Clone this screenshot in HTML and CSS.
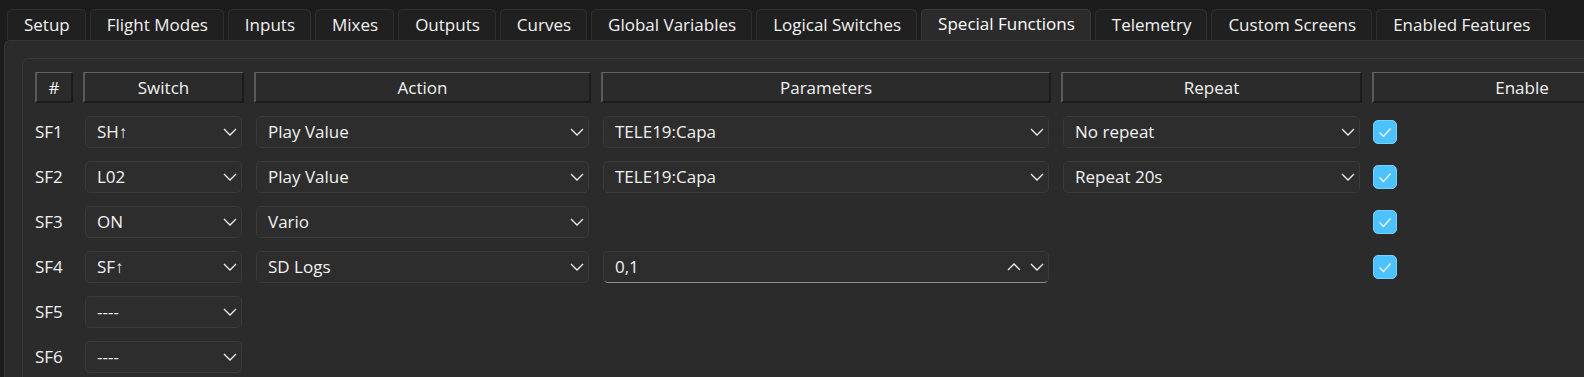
FILE: index.html
```html
<!DOCTYPE html>
<html>
<head>
  <meta charset="utf-8">
  <link rel="stylesheet" href="styles.css">
</head>
<body>
  <div class="tabs">
    <div class="tab">Setup</div>
    <div class="tab">Flight Modes</div>
    <div class="tab">Inputs</div>
    <div class="tab">Mixes</div>
    <div class="tab">Outputs</div>
    <div class="tab">Curves</div>
    <div class="tab">Global Variables</div>
    <div class="tab">Logical Switches</div>
    <div class="tab active">Special Functions</div>
    <div class="tab">Telemetry</div>
    <div class="tab">Custom Screens</div>
    <div class="tab">Enabled Features</div>
  </div>

  <div class="panel">
    <div class="frame">
      <div class="grid">
        <div class="head">#</div>
        <div class="head">Switch</div>
        <div class="head">Action</div>
        <div class="head">Parameters</div>
        <div class="head">Repeat</div>
        <div class="head">Enable</div>

        <!-- SF1 -->
        <div class="cell label">SF1</div>
        <div class="cell"><div class="combo"><span>SH↑</span><svg class="chev" viewBox="0 0 14 8"><polyline points="1,1 7,7 13,1"/></svg></div></div>
        <div class="cell"><div class="combo"><span>Play Value</span><svg class="chev" viewBox="0 0 14 8"><polyline points="1,1 7,7 13,1"/></svg></div></div>
        <div class="cell"><div class="combo"><span>TELE19:Capa</span><svg class="chev" viewBox="0 0 14 8"><polyline points="1,1 7,7 13,1"/></svg></div></div>
        <div class="cell"><div class="combo"><span>No repeat</span><svg class="chev" viewBox="0 0 14 8"><polyline points="1,1 7,7 13,1"/></svg></div></div>
        <div class="cell"><div class="check"><svg viewBox="0 0 22 22"><polyline points="5.5,11.5 9.5,15.5 16.5,7.5"/></svg></div></div>

        <!-- SF2 -->
        <div class="cell label">SF2</div>
        <div class="cell"><div class="combo"><span>L02</span><svg class="chev" viewBox="0 0 14 8"><polyline points="1,1 7,7 13,1"/></svg></div></div>
        <div class="cell"><div class="combo"><span>Play Value</span><svg class="chev" viewBox="0 0 14 8"><polyline points="1,1 7,7 13,1"/></svg></div></div>
        <div class="cell"><div class="combo"><span>TELE19:Capa</span><svg class="chev" viewBox="0 0 14 8"><polyline points="1,1 7,7 13,1"/></svg></div></div>
        <div class="cell"><div class="combo"><span>Repeat 20s</span><svg class="chev" viewBox="0 0 14 8"><polyline points="1,1 7,7 13,1"/></svg></div></div>
        <div class="cell"><div class="check"><svg viewBox="0 0 22 22"><polyline points="5.5,11.5 9.5,15.5 16.5,7.5"/></svg></div></div>

        <!-- SF3 -->
        <div class="cell label">SF3</div>
        <div class="cell"><div class="combo"><span>ON</span><svg class="chev" viewBox="0 0 14 8"><polyline points="1,1 7,7 13,1"/></svg></div></div>
        <div class="cell"><div class="combo"><span>Vario</span><svg class="chev" viewBox="0 0 14 8"><polyline points="1,1 7,7 13,1"/></svg></div></div>
        <div class="cell"></div>
        <div class="cell"></div>
        <div class="cell"><div class="check"><svg viewBox="0 0 22 22"><polyline points="5.5,11.5 9.5,15.5 16.5,7.5"/></svg></div></div>

        <!-- SF4 -->
        <div class="cell label">SF4</div>
        <div class="cell"><div class="combo"><span>SF↑</span><svg class="chev" viewBox="0 0 14 8"><polyline points="1,1 7,7 13,1"/></svg></div></div>
        <div class="cell"><div class="combo"><span>SD Logs</span><svg class="chev" viewBox="0 0 14 8"><polyline points="1,1 7,7 13,1"/></svg></div></div>
        <div class="cell">
          <div class="combo spin">
            <span>0,1</span>
            <span class="spin-btns">
              <svg class="chev" viewBox="0 0 14 8"><polyline points="1,7 7,1 13,7"/></svg>
              <svg class="chev" viewBox="0 0 14 8"><polyline points="1,1 7,7 13,1"/></svg>
            </span>
          </div>
        </div>
        <div class="cell"></div>
        <div class="cell"><div class="check"><svg viewBox="0 0 22 22"><polyline points="5.5,11.5 9.5,15.5 16.5,7.5"/></svg></div></div>

        <!-- SF5 -->
        <div class="cell label">SF5</div>
        <div class="cell"><div class="combo"><span>----</span><svg class="chev" viewBox="0 0 14 8"><polyline points="1,1 7,7 13,1"/></svg></div></div>
        <div class="cell"></div>
        <div class="cell"></div>
        <div class="cell"></div>
        <div class="cell"></div>

        <!-- SF6 -->
        <div class="cell label">SF6</div>
        <div class="cell"><div class="combo"><span>----</span><svg class="chev" viewBox="0 0 14 8"><polyline points="1,1 7,7 13,1"/></svg></div></div>
        <div class="cell"></div>
        <div class="cell"></div>
        <div class="cell"></div>
        <div class="cell"></div>
      </div>
    </div>
  </div>
</body>
</html>
```

FILE: styles.css
```css
html, body {
  margin: 0;
  padding: 0;
  width: 1584px;
  height: 377px;
  overflow: hidden;
}

body {
  background: #1c1c1c;
  font-family: 'Open Sans', 'Noto Sans', sans-serif;
  font-size: 17px;
  color: #f2f2f2;
}

.tabs {
  display: flex;
  gap: 4px;
  padding: 9px 0 0 7px;
  height: 31px;
}

.tab {
  height: 31px;
  box-sizing: border-box;
  padding: 0 15px 0 16px;
  font-size: 17px;
  line-height: 30px;
  background: #202020;
  border: 1px solid #2f2f2f;
  border-bottom: none;
  border-radius: 5px 5px 0 0;
  white-space: nowrap;
}

.tab.active {
  background: #2b2b2b;
  border-color: #3a3a3a;
  line-height: 27px;
  color: #ffffff;
}

.panel {
  margin-left: 4px;
  height: 337px;
  box-sizing: border-box;
  background: #2b2b2b;
  border: 1px solid #363636;
  border-right: none;
  border-bottom: none;
  border-radius: 6px 0 0 0;
  padding: 17px 0 0 17px;
}

.frame {
  height: 319px;
  box-sizing: border-box;
  overflow: hidden;
  border: 1px solid #393939;
  border-right: none;
  border-bottom: none;
  border-radius: 6px 0 0 0;
  padding: 13px 0 0 12px;
}

.grid {
  display: grid;
  grid-template-columns: 38px 161px 337px 450px 301px 300px;
  grid-template-rows: 37px repeat(6, 45px);
  column-gap: 10px;
}

.head {
  align-self: start;
  height: 31px;
  box-sizing: border-box;
  display: flex;
  align-items: center;
  justify-content: center;
  background: #2b2b2b;
  border-style: solid;
  border-width: 1px 2px 2px 2px;
  border-color: #636363 #1c1c1c #1c1c1c #5a5a5a;
  color: #f2f2f2;
}

.cell {
  display: flex;
  align-items: center;
}

.label {
  color: #f2f2f2;
}

.combo {
  flex: 1;
  margin: 0 2px;
  height: 32px;
  box-sizing: border-box;
  display: flex;
  align-items: center;
  justify-content: space-between;
  padding: 0 4px 0 11px;
  background: #2d2d2d;
  border: 1px solid #3a3a3a;
  border-radius: 5px;
  white-space: nowrap;
}

.chev {
  width: 14px;
  height: 8px;
  fill: none;
  stroke: #f4f4f4;
  stroke-width: 1.3;
}

.spin {
  border-bottom-color: #8e8e8e;
}

.spin-btns {
  display: flex;
  gap: 9px;
  align-items: center;
}

.check {
  margin-left: 1px;
  width: 24px;
  height: 24px;
  box-sizing: border-box;
  background: #4cc2ff;
  border: 1px solid #74d2ff;
  border-radius: 5px;
}

.check svg {
  display: block;
  width: 22px;
  height: 22px;
  fill: none;
  stroke: #f0f9ff;
  stroke-width: 1.4;
}
```
